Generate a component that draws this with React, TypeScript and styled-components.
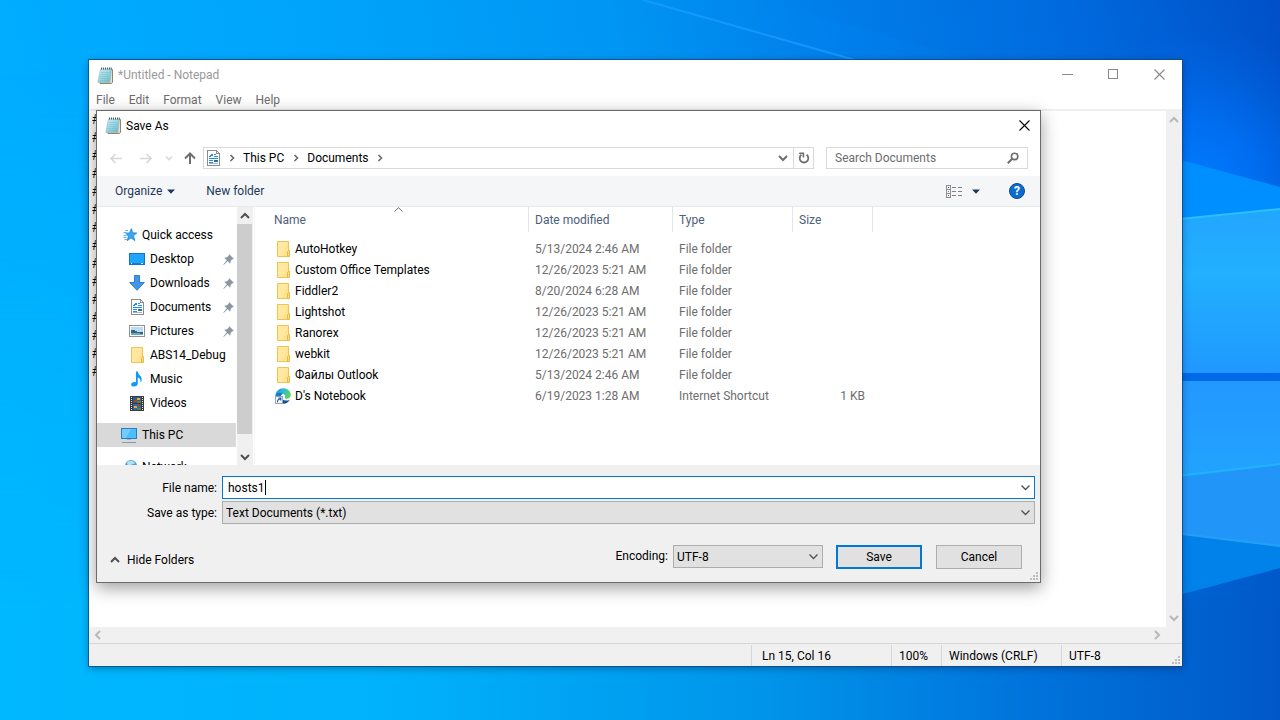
import React, { useState } from "react";
import styled, { createGlobalStyle, css } from "styled-components";

const GlobalStyle = createGlobalStyle`
  *, *::before, *::after { box-sizing: border-box; }
  body {
    margin: 0;
    font-family: Roboto, "Noto Sans", "Liberation Sans", sans-serif;
    font-size: 12px;
    line-height: 16px;
    color: #000;
  }
  button, input, select, textarea { font: inherit; color: inherit; }
`;

const plainButton = css`
  display: flex;
  align-items: center;
  margin: 0;
  padding: 0;
  border: 0;
  background: transparent;
`;

/* ---------- desktop ---------- */

const Desktop = styled.main`
  position: relative;
  display: grid;
  min-height: 100vh;
  padding: 60px 98px 54px 89px;
  overflow: hidden;
`;

const WallpaperArt = styled.svg`
  position: absolute;
  inset: 0;
  width: 100%;
  height: 100%;
`;

function Wallpaper() {
  return (
    <WallpaperArt viewBox="0 0 1280 720" preserveAspectRatio="xMaxYMid slice" aria-hidden="true">
      <defs>
        <linearGradient id="sky" x1="0" y1="0.12" x2="1" y2="0">
          <stop offset="0" stopColor="#00adff" />
          <stop offset="0.25" stopColor="#00a4fb" />
          <stop offset="0.48" stopColor="#0096f3" />
          <stop offset="0.65" stopColor="#007eea" />
          <stop offset="0.85" stopColor="#0068dc" />
          <stop offset="1" stopColor="#0050c8" />
        </linearGradient>
        <linearGradient id="floor" x1="0" y1="0" x2="1" y2="0">
          <stop offset="0" stopColor="#00b8ff" />
          <stop offset="0.3" stopColor="#00b2fb" />
          <stop offset="0.6" stopColor="#0094ea" />
          <stop offset="0.8" stopColor="#0074dc" />
          <stop offset="1" stopColor="#0058c8" />
        </linearGradient>
        <linearGradient id="fade" x1="0" y1="0" x2="0" y2="1">
          <stop offset="0.1" stopColor="#000" />
          <stop offset="0.85" stopColor="#fff" />
        </linearGradient>
        <mask id="lower"><rect width="1280" height="720" fill="url(#fade)" /></mask>
        <radialGradient id="glow" gradientUnits="userSpaceOnUse" cx="1195" cy="185" r="160">
          <stop offset="0" stopColor="#007cff" />
          <stop offset="0.4" stopColor="#0072f8" stopOpacity="0.8" />
          <stop offset="1" stopColor="#0064e4" stopOpacity="0" />
        </radialGradient>
        <linearGradient id="paneTop" x1="0" y1="0" x2="0" y2="1">
          <stop offset="0" stopColor="#22a6ff" />
          <stop offset="0.4" stopColor="#22b0ff" />
          <stop offset="1" stopColor="#2098ff" />
        </linearGradient>
        <linearGradient id="paneBottom" x1="0" y1="0" x2="0" y2="1">
          <stop offset="0" stopColor="#2298ff" />
          <stop offset="1" stopColor="#22a4ff" />
        </linearGradient>
      </defs>
      <rect width="1280" height="720" fill="url(#sky)" />
      <rect width="1280" height="720" fill="url(#floor)" mask="url(#lower)" />
      <path d="M643 0 860 62H980L760 0Z" fill="#0090ff" opacity="0.1" />
      <path d="M643 0 862 62" stroke="#1a9dff" strokeWidth="2" opacity="0.8" />
      <rect x="1030" y="20" width="250" height="200" fill="url(#glow)" />
      <path d="M1100 138 1280 187V210L1100 226Z" fill="#008fff" />
      <path d="M1100 227 1280 209V373H1100Z" fill="url(#paneTop)" />
      <path d="M1100 227 1280 209" stroke="#2cc0ff" strokeWidth="2" />
      <rect x="1100" y="373" width="180" height="8" fill="#006ae8" />
      <path d="M1100 381H1280V464L1100 485Z" fill="url(#paneBottom)" />
      <path d="M1100 485 1280 464V546L1100 524Z" fill="#2296f8" />
      <path d="M1100 485 1280 464" stroke="#1fb4ff" strokeWidth="2" />
      <path d="M1100 524 1280 546V568L1100 616Z" fill="#0082ea" />
      <path d="M1100 524 1280 546" stroke="#25a0f8" strokeWidth="2" />
    </WallpaperArt>
  );
}

/* ---------- notepad window ---------- */

const NotepadWindow = styled.section`
  position: relative;
  display: flex;
  flex-direction: column;
  min-width: 0;
  background: #fff;
  box-shadow: 0 0 0 1px rgba(20, 70, 120, 0.75), 0 2px 8px rgba(0, 20, 60, 0.4);
`;

const NotepadTitle = styled.header`
  display: flex;
  align-items: center;
  height: 30px;
  padding-left: 8px;
  color: #999;
`;

const WindowTitle = styled.h1`
  flex: 1;
  margin: 0 0 0 5px;
  font-size: 12px;
  font-weight: 400;
`;

const CaptionButton = styled.button<{ $dark?: boolean; $width?: number }>`
  ${plainButton}
  align-self: flex-start;
  justify-content: center;
  width: ${(p) => p.$width ?? 46}px;
  height: 28px;
  color: ${(p) => (p.$dark ? "#000" : "#888")};
`;

const MenuBar = styled.nav`
  display: flex;
  align-items: center;
  gap: 14px;
  height: 19px;
  padding-left: 7px;
  color: #6d6d6d;
`;

const MenuItem = styled.button`
  ${plainButton}
`;

const EditorArea = styled.div`
  display: grid;
  grid-template-columns: 1fr 16px;
  grid-template-rows: 1fr 16px;
  flex: 1;
  min-height: 534px;
  border-top: 2px solid #efefef;
  background: #f0f0f0;
`;

const Editor = styled.textarea`
  display: block;
  width: 100%;
  padding: 0 0 0 3px;
  border: 0;
  outline: 0;
  resize: none;
  overflow: hidden;
  background: #fff;
  font-family: "Liberation Mono", monospace;
  font-size: 14px;
  line-height: 18px;
`;

const ScrollTrack = styled.div<{ $horizontal?: boolean }>`
  display: flex;
  flex-direction: ${(p) => (p.$horizontal ? "row" : "column")};
  align-items: center;
  justify-content: space-between;
  padding: ${(p) => (p.$horizontal ? "0 2px" : "2px 0")};
  color: #b8b8b8;
`;

const ScrollButton = styled.button`
  ${plainButton}
  justify-content: center;
  width: 14px;
  height: 14px;
`;

const StatusBar = styled.footer`
  position: relative;
  display: flex;
  justify-content: flex-end;
  height: 23px;
  border-top: 1px solid #d7d7d7;
  background: #f0f0f0;
`;

const StatusCell = styled.span<{ $width: number; $indent?: number }>`
  width: ${(p) => p.$width}px;
  margin-top: 1px;
  padding: 3px 0 0 ${(p) => p.$indent ?? 7}px;
  border-left: 1px solid #d7d7d7;
  white-space: nowrap;
`;

const GripCorner = styled.span`
  position: absolute;
  right: 2px;
  bottom: 2px;
  display: flex;
`;

/* ---------- dialog ---------- */

const Dialog = styled.section`
  position: absolute;
  top: 50px;
  left: 7px;
  right: 141px;
  display: flex;
  flex-direction: column;
  border: 1px solid #6b6b6b;
  background: #fff;
  box-shadow: 0 5px 16px rgba(0, 0, 0, 0.38);
`;

const DialogTitle = styled.header`
  display: flex;
  align-items: center;
  height: 29px;
  padding-left: 8px;
`;

const NavRow = styled.div`
  display: flex;
  align-items: center;
  height: 36px;
  padding: 0 12px 0 4px;
`;

const NavButton = styled.button<{ $width: number; $off?: boolean }>`
  ${plainButton}
  justify-content: center;
  width: ${(p) => p.$width}px;
  height: 22px;
  color: ${(p) => (p.$off ? "#d8d8d8" : "#6f6f6f")};
`;

const AddressBar = styled.div`
  display: flex;
  align-items: center;
  flex: 1;
  height: 22px;
  border: 1px solid #d9d9d9;
`;

const AddressIcon = styled.span`
  display: flex;
  justify-content: flex-end;
  width: 16px;
`;

const Crumb = styled.button`
  ${plainButton}
`;

const CrumbArrow = styled.span`
  display: flex;
  justify-content: center;
  width: 23px;
  color: #6a6a6a;
`;

const Spacer = styled.span`
  flex: 1;
`;

const AddressButton = styled.button<{ $divided?: boolean }>`
  ${plainButton}
  justify-content: center;
  width: 20px;
  height: 20px;
  border-left: ${(p) => (p.$divided ? "1px solid #d9d9d9" : "0")};
  color: #6f6f6f;
`;

const SearchBox = styled.label`
  display: flex;
  align-items: center;
  width: 202px;
  height: 22px;
  margin-left: 12px;
  padding: 0 8px 0 8px;
  border: 1px solid #d9d9d9;
  color: #6d6d6d;
`;

const SearchInput = styled.input`
  flex: 1;
  min-width: 0;
  padding: 0;
  border: 0;
  outline: 0;
  background: transparent;
  &::placeholder { color: #6d6d6d; opacity: 1; }
`;

const Toolbar = styled.div`
  display: flex;
  align-items: center;
  height: 31px;
  padding: 0 15px 0 18px;
  border-bottom: 1px solid #e8e9ea;
  background: #f5f6f7;
  color: #1e395b;
`;

const ToolButton = styled.button<{ $after?: number }>`
  ${plainButton}
  gap: 5px;
  margin-right: ${(p) => p.$after ?? 0}px;
`;

const ViewButton = styled(ToolButton)`
  gap: 9px;
`;

const Browser = styled.div`
  display: flex;
  height: 258px;
  overflow: hidden;
`;

const Sidebar = styled.nav`
  flex: none;
  width: 140px;
  padding-top: 16px;
`;

const Group = styled.ul`
  margin: 0 0 8px;
  padding: 0;
  list-style: none;
`;

const Place = styled.li<{ $root?: boolean; $selected?: boolean }>`
  display: flex;
  align-items: center;
  height: 24px;
  margin-right: 1px;
  padding: 0 0 0 ${(p) => (p.$root ? 24 : 32)}px;
  gap: 5px;
  background: ${(p) => (p.$selected ? "#d9d9d9" : "transparent")};
  white-space: nowrap;
`;

const PlaceButton = styled.button`
  ${plainButton}
  flex: 1;
  gap: 5px;
`;

const Pin = styled.span`
  display: flex;
  width: 13px;
`;

const SideScroll = styled.div`
  display: flex;
  flex-direction: column;
  flex: none;
  width: 16px;
  background: #f0f0f0;
  color: #505050;
`;

const SideScrollButton = styled.button`
  ${plainButton}
  justify-content: center;
  height: 17px;
`;

const Thumb = styled.div`
  height: 210px;
  margin-right: 1px;
  background: #cdcdcd;
`;

const FilePane = styled.div`
  flex: 1;
  min-width: 0;
  margin-left: 1px;
  border-left: 1px solid #f7f7f7;
`;

const FileTable = styled.table`
  width: 618px;
  table-layout: fixed;
  border-collapse: separate;
  border-spacing: 0;
  color: #6d6d6d;
  tbody::before { content: ""; display: block; height: 6px; }
`;

const HeadCell = styled.th<{ $width: number; $first?: boolean }>`
  position: relative;
  width: ${(p) => p.$width}px;
  height: 25px;
  padding: 0 0 0 ${(p) => (p.$first ? 19 : 6)}px;
  border-right: 1px solid #e5e5e5;
  color: #4c607a;
  font-weight: 400;
  text-align: left;
`;

const SortMark = styled.span`
  position: absolute;
  top: 0;
  left: 50%;
  display: flex;
  margin-left: 2px;
  color: #6d6d6d;
`;

const Cell = styled.td<{ $right?: boolean }>`
  height: 21px;
  padding: 0 8px 0 6px;
  text-align: ${(p) => (p.$right ? "right" : "left")};
  white-space: nowrap;
`;

const NameCell = styled.td`
  height: 21px;
  padding: 0 0 0 20px;
  color: #000;
`;

const FileName = styled.span`
  display: flex;
  align-items: center;
  gap: 4px;
`;

const Footer = styled.form`
  position: relative;
  padding: 11px 5px 7px 0;
  background: #f0f0f0;
`;

const FieldGrid = styled.div`
  display: grid;
  grid-template-columns: 120px 1fr;
  column-gap: 5px;
  row-gap: 2px;
  align-items: center;
`;

const FieldLabel = styled.label`
  text-align: right;
  white-space: nowrap;
`;

const NameField = styled.div`
  display: flex;
  align-items: center;
  height: 23px;
  padding: 0 4px 0 5px;
  border: 1px solid #0078d7;
  background: #fff;
`;

const NameInput = styled.input`
  field-sizing: content;
  min-width: 4px;
  padding: 0;
  border: 0;
  outline: 0;
  background: transparent;
  caret-color: transparent;
`;

const Caret = styled.span`
  width: 1px;
  height: 15px;
  background: #000;
`;

const DropButton = styled.button`
  ${plainButton}
  margin-left: auto;
  color: #505050;
`;

const SelectBox = styled.div<{ $width?: number }>`
  position: relative;
  width: ${(p) => (p.$width ? `${p.$width}px` : "auto")};
  color: #000;
  svg {
    position: absolute;
    top: 8px;
    right: 5px;
    color: #505050;
    pointer-events: none;
  }
`;

const Select = styled.select`
  display: block;
  appearance: none;
  width: 100%;
  height: 23px;
  padding: 0 20px 0 3px;
  border: 1px solid #adadad;
  border-radius: 0;
  outline: 0;
  background: #e1e1e1;
`;

const Actions = styled.div`
  display: flex;
  align-items: flex-start;
  margin-top: 21px;
  padding: 0 13px 0 13px;
`;

const HideFolders = styled.button`
  ${plainButton}
  gap: 7px;
  height: 30px;
  margin-right: auto;
  svg { color: #505050; }
`;

const EncodingLabel = styled.label`
  margin-right: 5px;
  line-height: 23px;
`;

const ActionButton = styled.button<{ $primary?: boolean; $before: number }>`
  width: 86px;
  height: 24px;
  margin-left: ${(p) => p.$before}px;
  padding: 0;
  border: ${(p) => (p.$primary ? "2px solid #0078d7" : "1px solid #adadad")};
  background: #e1e1e1;
`;

/* ---------- icons ---------- */

const Svg = ({ w = 16, h = 16, crisp = false, children }: { w?: number; h?: number; crisp?: boolean; children: React.ReactNode }) => (
  <svg width={w} height={h} viewBox={`0 0 ${w} ${h}`} fill="none" shapeRendering={crisp ? "crispEdges" : "auto"} aria-hidden="true">
    {children}
  </svg>
);

const turns = { up: 180, down: 0, left: 90, right: 270 };

const ThickChevron = ({ dir, w = 2 }: { dir: keyof typeof turns; w?: number }) => (
  <Svg w={10} h={10}>
    <path d="M1 3 5 7 9 3" stroke="currentColor" strokeWidth={w} transform={`rotate(${turns[dir]} 5 5)`} />
  </Svg>
);

const SmallChevron = ({ dir }: { dir: keyof typeof turns }) => (
  <Svg w={8} h={8}>
    <path d="M1 2.5 4 5.5 7 2.5" stroke="currentColor" strokeWidth="1.6" transform={`rotate(${turns[dir]} 4 4)`} />
  </Svg>
);

const ComboChevron = () => (
  <Svg w={9} h={7}>
    <path d="M0.5 1.5 4.5 5.5 8.5 1.5" stroke="currentColor" strokeWidth="1.3" />
  </Svg>
);

const DownTriangle = () => (
  <Svg w={8} h={5}>
    <path d="M0 0.5H8L4 4.8Z" fill="currentColor" />
  </Svg>
);

const CloseIcon = () => (
  <Svg w={11} h={11}>
    <path d="M0.5 0.5 10.5 10.5M10.5 0.5 0.5 10.5" stroke="currentColor" strokeWidth="1.1" />
  </Svg>
);

const NotepadIcon = () => (
  <Svg w={16} h={17}>
    <defs>
      <linearGradient id="pad" x1="0" y1="0" x2="1" y2="1">
        <stop offset="0" stopColor="#d3f0f4" />
        <stop offset="0.5" stopColor="#9bd6e2" />
        <stop offset="1" stopColor="#66b9cc" />
      </linearGradient>
    </defs>
    <path d="M4.5 2.5H15.5V15.5L14 16.5H3Z" fill="#e9e1cd" stroke="#8d7650" strokeWidth="0.9" />
    <path d="M3.5 2H14.5L12.8 15.5H0.8Z" fill="url(#pad)" stroke="#86b9c4" strokeWidth="0.6" />
    <path d="M4 5.5H13.5M3.6 7.5H13.2M3.2 9.5H13M2.8 11.5H12.6M2.4 13.5H12.4" stroke="#6fb4c4" strokeWidth="0.4" />
    <path d="M4.5 0.5V2.5M6.5 0.5V2.5M8.5 0.5V2.5M10.5 0.5V2.5M12.5 0.5V2.5M14.3 0.5V2.5" stroke="#454c4f" strokeWidth="0.9" />
  </Svg>
);

const DocumentIcon = () => (
  <Svg w={13} h={16} crisp>
    <path d="M0.5 0.5H9.5L12.5 3.5V15.5H0.5Z" fill="#fff" stroke="#8c8c8c" />
    <path d="M9.5 0.5V3.5H12.5" stroke="#8c8c8c" />
    <path d="M2 6.5H4M3 5.5H5M5 3.5V6M4 4.5H6M7 4.5H9M7 6.5H11M2 8.5H11M2 10.5H6M2 12.5H6" stroke="#1e8fe0" />
    <path d="M2 13.5H11" stroke="#a8b4bd" />
    <path d="M7 10H11V12H7Z" fill="#2f6f9f" />
  </Svg>
);

const FolderIcon = ({ w = 13 }: { w?: number }) => (
  <Svg w={w} h={16}>
    <path d="M0.5 0.5H11.5V15.5H0.5Z" fill="#ffe391" stroke="#edc452" />
    <path d="M1 1H11L5 15H1Z" fill="#ffe9a6" opacity="0.7" />
    <path d="M10.5 10.5 11.5 9.5H12.5V15.5H10.5Z" fill="#fbdc7c" stroke="#e3b53c" strokeWidth="0.9" />
  </Svg>
);

const EdgeIcon = () => (
  <Svg>
    <defs>
      <linearGradient id="edgeTop" x1="0" y1="0" x2="1" y2="0.3">
        <stop offset="0" stopColor="#1a8fe0" />
        <stop offset="0.5" stopColor="#2bb9d8" />
        <stop offset="1" stopColor="#5fd35a" />
      </linearGradient>
    </defs>
    <path d="M0.5 8C0.5 3.5 4 0.3 8.2 0.3 12.8 0.3 15.8 3.6 15.8 7 15.8 9.3 14 10.8 11.8 10.8 10 10.8 9.4 10 9.9 9.2 10.6 8.2 10 6 7.4 6 4.6 6 3 9 4 12Z" fill="url(#edgeTop)" />
    <path d="M6.2 8.5C6 11.5 9 13.5 14.8 12 13.4 14.4 11 15.8 8.2 15.8L4 12Z" fill="#124f9c" />
    <path d="M0.5 8C1 5 5 3.5 8 6 5.2 6.5 5 10 7 13L2 13Z" fill="#1479ca" />
    <rect x="0.5" y="8.5" width="7" height="7" fill="#f7f8fb" stroke="#9aa3b2" />
    <path d="M2.5 14.2C2.3 12 3.3 11 5.6 11M3.4 10H5.8V12.6" stroke="#1c56a8" strokeWidth="1.1" />
  </Svg>
);

const StarIcon = () => (
  <Svg w={14} h={14}>
    <path d="M8.4 0.6 9.6 4.8 13.8 5 10.5 7.6 11.8 12.6 7.9 9.9 4.3 12.7 5.4 8.2 2.8 5.2 6.5 4.9Z" fill="#37a8f5" stroke="#1b86d6" strokeWidth="0.8" />
    <path d="M2 2.5H5M0.5 4.5H3.5M0.5 7.5H3.5M0.5 9.5H3.5M1.5 11.5H4" stroke="#4eb0f2" strokeWidth="0.9" />
  </Svg>
);

const DesktopIcon = () => (
  <Svg crisp>
    <rect x="0.5" y="2.5" width="15" height="11" fill="#1ea6ff" stroke="#1374c8" />
    <path d="M1 12.5H15" stroke="#0d7ad6" />
    <path d="M2 12.5H3M12 12.5H14" stroke="#d9f0ff" />
  </Svg>
);

const DownloadIcon = () => (
  <Svg>
    <path d="M5.5 0.5H10.5V7.5H15.3L8 15.3 0.7 7.5H5.5Z" fill="#3f97e8" stroke="#2f7fcf" />
  </Svg>
);

const PictureIcon = () => (
  <Svg crisp>
    <rect x="0.5" y="2.5" width="15" height="11" fill="#fff" stroke="#8f8f8f" />
    <rect x="2" y="4" width="12" height="8" fill="#b8dcf5" />
    <path d="M2 7 5 7 9 9 14 9V12H2Z" fill="#37687a" />
    <path d="M2 10H8L14 11V12H2Z" fill="#6ba7c9" />
  </Svg>
);

const MusicIcon = () => (
  <Svg>
    <path d="M7 0.5H8.8C9 4 13.6 5 12.6 9.6 12.3 10.8 11.8 11.4 11.4 11.8 12 8.6 11 7.2 8.8 6.4V12.6C8.8 14.4 7 15.6 5 15.6 3.2 15.6 2 14.6 2.2 13.2 2.4 11.6 4.6 10.6 7 11.2Z" fill="#0f9bf2" />
  </Svg>
);

const VideoIcon = () => (
  <Svg crisp>
    <rect x="1" y="1" width="14" height="15" fill="#3a3a3a" />
    <path d="M2.5 2V16M13.5 2V16" stroke="#e4e4e4" strokeDasharray="1 1" />
    <rect x="4" y="2" width="8" height="6" fill="#2c5c9c" />
    <rect x="4" y="9" width="8" height="6" fill="#3666b0" />
    <path d="M5 5H8V7H5ZM9 9H11V11H9Z" fill="#b4401f" />
    <path d="M8 3H11V5H8ZM5 11H8V13H5Z" fill="#e0b324" />
    <path d="M8 6H12V8H8ZM8 13H12V15H8Z" fill="#4e8a3a" />
  </Svg>
);

const ComputerIcon = () => (
  <Svg crisp>
    <rect x="0.5" y="1.5" width="15" height="10" fill="#4fbcff" stroke="#2b7fb8" />
    <path d="M1 2H10L5 11H1Z" fill="#74cbff" />
    <path d="M6 12.5H10" stroke="#9db3c4" />
    <path d="M1 15.5H15" stroke="#8399b0" />
  </Svg>
);

const NetworkIcon = () => (
  <Svg>
    <circle cx="10" cy="7" r="6" fill="#4aa3d4" />
    <path d="M6 4C7 1 12 1 14 4 12 6 9 5 7.5 8Z" fill="#b4dff0" />
    <rect x="1" y="8" width="9" height="6" fill="#39a8ef" stroke="#2b7fb8" />
  </Svg>
);

const PinIcon = () => (
  <Svg w={11} h={11}>
    <path d="M6.3 0.6 10.4 4.7 9.2 5.2 7.4 7 7.1 9.3 4.7 7 0.6 10.6 4 6.3 1.7 3.9 4 3.6 5.8 1.8Z" fill="#8896a3" stroke="#8896a3" strokeWidth="0.5" />
  </Svg>
);

const GripIcon = () => (
  <Svg w={8} h={8} crisp>
    <path d="M6 0H8V2H6ZM6 3H8V5H6ZM6 6H8V8H6ZM3 3H5V5H3ZM3 6H5V8H3ZM0 6H2V8H0Z" fill="#bdbdbd" />
  </Svg>
);

const ViewIcon = () => (
  <Svg w={17} h={13} crisp>
    <path d="M0.5 0.5H4.5V12.5H0.5ZM0.5 4.5H4.5M0.5 8.5H4.5" stroke="#8d8d8d" />
    <path d="M2 2.5H3" stroke="#555" />
    <path d="M2 6.5H3" stroke="#2f8be0" />
    <path d="M2 10.5H3" stroke="#d33" />
    <path d="M6 2.5H10M12 2.5H16M6 6.5H10M12 6.5H16M6 10.5H10M12 10.5H16" stroke="#828282" />
  </Svg>
);

const HelpBadge = styled.span`
  display: flex;
  align-items: center;
  justify-content: center;
  width: 16px;
  height: 16px;
  border: 1px solid #0a4a94;
  border-radius: 50%;
  background: #0b6ccf;
  color: #fff;
  font-weight: 700;
  line-height: 14px;
`;

const BackIcon = ({ flip = false }: { flip?: boolean }) => (
  <Svg w={12} h={11}>
    <path d="M12 5.5H1M5.5 1 1 5.5 5.5 10" stroke="currentColor" strokeWidth="1.6" transform={flip ? "matrix(-1 0 0 1 12 0)" : undefined} />
  </Svg>
);

const UpIcon = () => (
  <Svg w={12} h={12}>
    <path d="M6 12V1.5M1 6.5 6 1.5 11 6.5" stroke="currentColor" strokeWidth="2" />
  </Svg>
);

const RefreshIcon = () => (
  <Svg w={12} h={12}>
    <path d="M8.6 2.8A4.3 4.3 0 1 1 3.4 2.8" stroke="currentColor" strokeWidth="1.8" />
    <path d="M1.2 1.2H5.4V5.4" stroke="currentColor" strokeWidth="1.6" />
  </Svg>
);

const SearchIcon = () => (
  <Svg w={12} h={12}>
    <circle cx="7.6" cy="4.4" r="3.2" stroke="currentColor" strokeWidth="1.6" />
    <path d="M5.2 6.8 0.8 11.2" stroke="currentColor" strokeWidth="2" />
  </Svg>
);

/* ---------- content ---------- */

const IconSlot = styled.span<{ $end?: boolean }>`
  display: flex;
  justify-content: ${(p) => (p.$end ? "flex-end" : "center")};
  width: 16px;
`;

const MENUS = ["File", "Edit", "Format", "View", "Help"];

const PLACES = [
  { label: "Desktop", icon: <DesktopIcon />, pinned: true },
  { label: "Downloads", icon: <DownloadIcon />, pinned: true },
  { label: "Documents", icon: <DocumentIcon />, pinned: true },
  { label: "Pictures", icon: <PictureIcon />, pinned: true },
  { label: "ABS14_Debug", icon: <FolderIcon />, pinned: false },
  { label: "Music", icon: <MusicIcon />, pinned: false },
  { label: "Videos", icon: <VideoIcon />, pinned: false },
];

const FILES = [
  ["AutoHotkey", "5/13/2024 2:46 AM", "File folder", ""],
  ["Custom Office Templates", "12/26/2023 5:21 AM", "File folder", ""],
  ["Fiddler2", "8/20/2024 6:28 AM", "File folder", ""],
  ["Lightshot", "12/26/2023 5:21 AM", "File folder", ""],
  ["Ranorex", "12/26/2023 5:21 AM", "File folder", ""],
  ["webkit", "12/26/2023 5:21 AM", "File folder", ""],
  ["Файлы Outlook", "5/13/2024 2:46 AM", "File folder", ""],
  ["D's Notebook", "6/19/2023 1:28 AM", "Internet Shortcut", "1 KB"],
];

function SaveAsDialog() {
  const [fileName, setFileName] = useState("hosts1");
  return (
    <Dialog role="dialog" aria-label="Save As">
      <DialogTitle>
        <NotepadIcon />
        <WindowTitle as="h2">Save As</WindowTitle>
        <CaptionButton type="button" $dark $width={31} aria-label="Close">
          <CloseIcon />
        </CaptionButton>
      </DialogTitle>
      <NavRow>
        <NavButton type="button" $width={30} $off aria-label="Back"><BackIcon /></NavButton>
        <NavButton type="button" $width={30} $off aria-label="Forward"><BackIcon flip /></NavButton>
        <NavButton type="button" $width={16} $off aria-label="Recent locations"><SmallChevron dir="down" /></NavButton>
        <NavButton type="button" $width={26} aria-label="Up"><UpIcon /></NavButton>
        <AddressBar>
          <AddressIcon><DocumentIcon /></AddressIcon>
          <CrumbArrow><SmallChevron dir="right" /></CrumbArrow>
          <Crumb type="button">This PC</Crumb>
          <CrumbArrow><SmallChevron dir="right" /></CrumbArrow>
          <Crumb type="button">Documents</Crumb>
          <CrumbArrow><SmallChevron dir="right" /></CrumbArrow>
          <Spacer />
          <AddressButton type="button" aria-label="Previous locations"><ThickChevron dir="down" /></AddressButton>
          <AddressButton type="button" $divided aria-label="Refresh"><RefreshIcon /></AddressButton>
        </AddressBar>
        <SearchBox>
          <SearchInput type="text" placeholder="Search Documents" aria-label="Search Documents" />
          <SearchIcon />
        </SearchBox>
      </NavRow>
      <Toolbar>
        <ToolButton type="button" $after={31}>Organize<DownTriangle /></ToolButton>
        <ToolButton type="button">New folder</ToolButton>
        <Spacer />
        <ViewButton type="button" $after={29} aria-label="Change view"><ViewIcon /><DownTriangle /></ViewButton>
        <ToolButton type="button" aria-label="Help"><HelpBadge>?</HelpBadge></ToolButton>
      </Toolbar>
      <Browser>
        <Sidebar>
          <Group>
            <Place $root><PlaceButton type="button"><IconSlot $end><StarIcon /></IconSlot>Quick access</PlaceButton></Place>
            {PLACES.map((p) => (
              <Place key={p.label}>
                <PlaceButton type="button"><IconSlot>{p.icon}</IconSlot>{p.label}</PlaceButton>
                {p.pinned && <Pin><PinIcon /></Pin>}
              </Place>
            ))}
          </Group>
          <Group>
            <Place $root $selected><PlaceButton type="button"><ComputerIcon />This PC</PlaceButton></Place>
          </Group>
          <Group>
            <Place $root><PlaceButton type="button"><NetworkIcon />Network</PlaceButton></Place>
          </Group>
        </Sidebar>
        <SideScroll>
          <SideScrollButton type="button" aria-label="Scroll up"><ThickChevron dir="up" /></SideScrollButton>
          <Thumb />
          <Spacer />
          <SideScrollButton type="button" aria-label="Scroll down"><ThickChevron dir="down" /></SideScrollButton>
        </SideScroll>
        <FilePane>
          <FileTable>
            <thead>
              <tr>
                <HeadCell $width={274} $first>Name<SortMark><Svg w={9} h={5}><path d="M0.5 4.5 4.5 0.7 8.5 4.5" stroke="currentColor" /></Svg></SortMark></HeadCell>
                <HeadCell $width={144}>Date modified</HeadCell>
                <HeadCell $width={120}>Type</HeadCell>
                <HeadCell $width={80}>Size</HeadCell>
              </tr>
            </thead>
            <tbody>
              {FILES.map(([name, date, type, size]) => (
                <tr key={name}>
                  <NameCell>
                    <FileName>
                      <IconSlot>{size ? <EdgeIcon /> : <FolderIcon />}</IconSlot>
                      {name}
                    </FileName>
                  </NameCell>
                  <Cell>{date}</Cell>
                  <Cell>{type}</Cell>
                  <Cell $right>{size}</Cell>
                </tr>
              ))}
            </tbody>
          </FileTable>
        </FilePane>
      </Browser>
      <Footer onSubmit={(e) => e.preventDefault()}>
        <FieldGrid>
          <FieldLabel htmlFor="file-name">File name:</FieldLabel>
          <NameField>
            <NameInput id="file-name" type="text" value={fileName} onChange={(e) => setFileName(e.target.value)} />
            <Caret />
            <DropButton type="button" aria-label="Recent names"><ComboChevron /></DropButton>
          </NameField>
          <FieldLabel htmlFor="file-type">Save as type:</FieldLabel>
          <SelectBox>
            <Select id="file-type"><option>Text Documents (*.txt)</option><option>All Files</option></Select>
            <ComboChevron />
          </SelectBox>
        </FieldGrid>
        <Actions>
          <HideFolders type="button"><ThickChevron dir="up" />Hide Folders</HideFolders>
          <EncodingLabel htmlFor="encoding">Encoding:</EncodingLabel>
          <SelectBox $width={150}>
            <Select id="encoding"><option>UTF-8</option><option>ANSI</option></Select>
            <ComboChevron />
          </SelectBox>
          <ActionButton type="submit" $primary $before={13}>Save</ActionButton>
          <ActionButton type="button" $before={14}>Cancel</ActionButton>
        </Actions>
        <GripCorner><GripIcon /></GripCorner>
      </Footer>
    </Dialog>
  );
}

export default function App() {
  return (
    <>
      <GlobalStyle />
      <Desktop>
        <Wallpaper />
        <NotepadWindow>
          <NotepadTitle>
            <NotepadIcon />
            <WindowTitle>*Untitled - Notepad</WindowTitle>
            <CaptionButton type="button" aria-label="Minimize"><Svg w={11} h={11} crisp><path d="M0 5.5H11" stroke="currentColor" /></Svg></CaptionButton>
            <CaptionButton type="button" aria-label="Maximize"><Svg w={10} h={10} crisp><rect x="0.5" y="0.5" width="9" height="9" stroke="currentColor" /></Svg></CaptionButton>
            <CaptionButton type="button" aria-label="Close"><CloseIcon /></CaptionButton>
          </NotepadTitle>
          <MenuBar>
            {MENUS.map((m) => <MenuItem key={m} type="button">{m}</MenuItem>)}
          </MenuBar>
          <EditorArea>
            <Editor aria-label="Document text" spellCheck={false} defaultValue={Array(15).fill("#").join("\n")} />
            <ScrollTrack>
              <ScrollButton type="button" aria-label="Scroll up"><ThickChevron dir="up" /></ScrollButton>
              <ScrollButton type="button" aria-label="Scroll down"><ThickChevron dir="down" /></ScrollButton>
            </ScrollTrack>
            <ScrollTrack $horizontal>
              <ScrollButton type="button" aria-label="Scroll left"><ThickChevron dir="left" /></ScrollButton>
              <ScrollButton type="button" aria-label="Scroll right"><ThickChevron dir="right" /></ScrollButton>
            </ScrollTrack>
          </EditorArea>
          <StatusBar>
            <StatusCell $width={140} $indent={10}>Ln 15, Col 16</StatusCell>
            <StatusCell $width={50}>100%</StatusCell>
            <StatusCell $width={120}>Windows (CRLF)</StatusCell>
            <StatusCell $width={121}>UTF-8</StatusCell>
            <GripCorner><GripIcon /></GripCorner>
          </StatusBar>
          <SaveAsDialog />
        </NotepadWindow>
      </Desktop>
    </>
  );
}
